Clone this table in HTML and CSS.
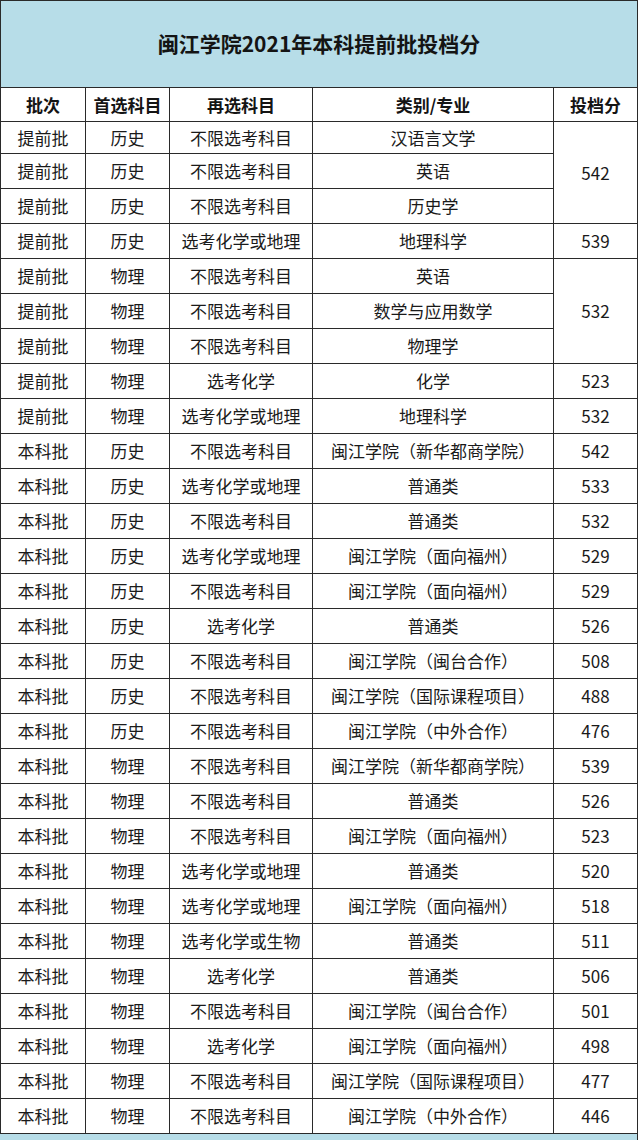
FILE: index.html
```html
<!DOCTYPE html>
<html lang="zh-CN">
<head>
<meta charset="utf-8">
<title>闽江学院2021年本科提前批投档分</title>
<link rel="stylesheet" href="styles.css">
</head>
<body>
<table class="score-table">
  <colgroup>
    <col class="c1"><col class="c2"><col class="c3"><col class="c4"><col class="c5">
  </colgroup>
  <tr class="title-row"><td colspan="5">闽江学院2021年本科提前批投档分</td></tr>
  <tr class="head-row"><th>批次</th><th>首选科目</th><th>再选科目</th><th>类别/专业</th><th>投档分</th></tr>
  <tr class="first-row"><td>提前批</td><td>历史</td><td>不限选考科目</td><td>汉语言文学</td><td rowspan="3">542</td></tr>
  <tr><td>提前批</td><td>历史</td><td>不限选考科目</td><td>英语</td></tr>
  <tr><td>提前批</td><td>历史</td><td>不限选考科目</td><td>历史学</td></tr>
  <tr><td>提前批</td><td>历史</td><td>选考化学或地理</td><td>地理科学</td><td>539</td></tr>
  <tr><td>提前批</td><td>物理</td><td>不限选考科目</td><td>英语</td><td rowspan="3">532</td></tr>
  <tr><td>提前批</td><td>物理</td><td>不限选考科目</td><td>数学与应用数学</td></tr>
  <tr><td>提前批</td><td>物理</td><td>不限选考科目</td><td>物理学</td></tr>
  <tr><td>提前批</td><td>物理</td><td>选考化学</td><td>化学</td><td>523</td></tr>
  <tr><td>提前批</td><td>物理</td><td>选考化学或地理</td><td>地理科学</td><td>532</td></tr>
  <tr><td>本科批</td><td>历史</td><td>不限选考科目</td><td>闽江学院（新华都商学院）</td><td>542</td></tr>
  <tr><td>本科批</td><td>历史</td><td>选考化学或地理</td><td>普通类</td><td>533</td></tr>
  <tr><td>本科批</td><td>历史</td><td>不限选考科目</td><td>普通类</td><td>532</td></tr>
  <tr><td>本科批</td><td>历史</td><td>选考化学或地理</td><td>闽江学院（面向福州）</td><td>529</td></tr>
  <tr><td>本科批</td><td>历史</td><td>不限选考科目</td><td>闽江学院（面向福州）</td><td>529</td></tr>
  <tr><td>本科批</td><td>历史</td><td>选考化学</td><td>普通类</td><td>526</td></tr>
  <tr><td>本科批</td><td>历史</td><td>不限选考科目</td><td>闽江学院（闽台合作）</td><td>508</td></tr>
  <tr><td>本科批</td><td>历史</td><td>不限选考科目</td><td>闽江学院（国际课程项目）</td><td>488</td></tr>
  <tr><td>本科批</td><td>历史</td><td>不限选考科目</td><td>闽江学院（中外合作）</td><td>476</td></tr>
  <tr><td>本科批</td><td>物理</td><td>不限选考科目</td><td>闽江学院（新华都商学院）</td><td>539</td></tr>
  <tr><td>本科批</td><td>物理</td><td>不限选考科目</td><td>普通类</td><td>526</td></tr>
  <tr><td>本科批</td><td>物理</td><td>不限选考科目</td><td>闽江学院（面向福州）</td><td>523</td></tr>
  <tr><td>本科批</td><td>物理</td><td>选考化学或地理</td><td>普通类</td><td>520</td></tr>
  <tr><td>本科批</td><td>物理</td><td>选考化学或地理</td><td>闽江学院（面向福州）</td><td>518</td></tr>
  <tr><td>本科批</td><td>物理</td><td>选考化学或生物</td><td>普通类</td><td>511</td></tr>
  <tr><td>本科批</td><td>物理</td><td>选考化学</td><td>普通类</td><td>506</td></tr>
  <tr><td>本科批</td><td>物理</td><td>不限选考科目</td><td>闽江学院（闽台合作）</td><td>501</td></tr>
  <tr><td>本科批</td><td>物理</td><td>选考化学</td><td>闽江学院（面向福州）</td><td>498</td></tr>
  <tr><td>本科批</td><td>物理</td><td>不限选考科目</td><td>闽江学院（国际课程项目）</td><td>477</td></tr>
  <tr><td>本科批</td><td>物理</td><td>不限选考科目</td><td>闽江学院（中外合作）</td><td>446</td></tr>
  <tr class="tail-row"><td colspan="5"></td></tr>
</table>
</body>
</html>
```

FILE: styles.css
```css
html, body {
  margin: 0;
  padding: 0;
  background: #ffffff;
  overflow: hidden;
  height: 1140px;
}

.score-table {
  border-collapse: collapse;
  table-layout: fixed;
  width: 637px;
  font-family: "Noto Sans CJK SC", "Microsoft YaHei", sans-serif;
  color: #1a1a1a;
}

.c1 { width: 85px; }
.c2 { width: 84px; }
.c3 { width: 143px; }
.c4 { width: 241px; }
.c5 { width: 84px; }

.score-table td,
.score-table th {
  border: 1px solid #2a2a2a;
  padding: 0;
  text-align: center;
  vertical-align: middle;
  font-size: 17px;
  font-weight: 400;
  line-height: 20px;
  white-space: nowrap;
  overflow: hidden;
}

.score-table tr {
  height: 35px;
}

.title-row {
  height: 87px !important;
}

.title-row td {
  background: #b7dde8;
  font-size: 21px;
  font-weight: 700;
  color: #141414;
  padding-bottom: 2px;
}

.head-row {
  height: 34px !important;
}

.head-row th {
  font-weight: 700;
  color: #141414;
}

.first-row {
  height: 32px !important;
}

.tail-row {
  height: 12px !important;
}

.tail-row td {
  background: #b7dde8;
  border-left-color: #b7dde8;
  border-bottom: none;
}
```
